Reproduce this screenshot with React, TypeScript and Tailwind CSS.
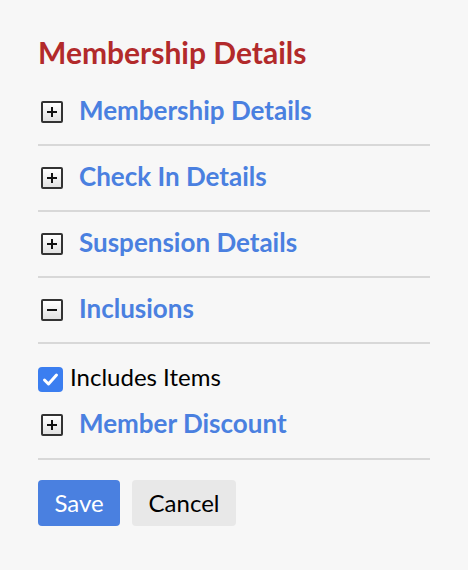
import { useState } from 'react';

type Section = { title: string; open: boolean };

function ToggleIcon({ open }: { open: boolean }) {
  return (
    <span className="flex h-[22px] w-[22px] shrink-0 items-center justify-center rounded-[2px] border-2 border-[#333] bg-gradient-to-b from-white to-[#e2e2e2]">
      <svg width="12" height="12" viewBox="0 0 12 12">
        <rect x="1" y="5" width="10" height="2" fill="#111" />
        {!open && <rect x="5" y="1" width="2" height="10" fill="#111" />}
      </svg>
    </span>
  );
}

function SectionHeader({ title, open, h = 'h-[64px]' }: Section & { h?: string }) {
  return (
    <div className={`flex ${h} items-center gap-4 pl-[3px]`}>
      <ToggleIcon open={open} />
      <span className="mb-1 text-[26px] font-bold text-[#4a80e0]">{title}</span>
    </div>
  );
}

export default function App() {
  const [includes, setIncludes] = useState(true);

  return (
    <div className="min-h-[570px] w-[468px] bg-[#f7f7f7] pl-[38px] pt-[34px] font-['Lato',sans-serif]">
      <div className="w-[392px]">
        <h1 className="mb-[10px] text-[30px] font-bold leading-[36px] text-[#b22a2b]">Membership Details</h1>

        {[
          { title: 'Membership Details', open: false },
          { title: 'Check In Details', open: false },
          { title: 'Suspension Details', open: false },
          { title: 'Inclusions', open: true },
        ].map((s) => (
          <div key={s.title} className="border-b-2 border-[#d8d8d8]">
            <SectionHeader {...s} />
          </div>
        ))}

        <label className="mt-[22px] flex h-[26px] cursor-pointer items-center gap-[7px]">
          <input
            type="checkbox"
            checked={includes}
            onChange={(e) => setIncludes(e.target.checked)}
            className="sr-only"
          />
          <span
            className={
              includes
                ? 'flex h-[25px] w-[25px] items-center justify-center rounded-[4px] bg-[#3b7ef0]'
                : 'flex h-[25px] w-[25px] items-center justify-center rounded-[4px] border-2 border-[#767676] bg-white'
            }
          >
            {includes && (
              <svg width="17" height="17" viewBox="0 0 17 17">
                <path d="M2.5 9l4 4L14.5 4" fill="none" stroke="#fff" strokeWidth="3" strokeLinecap="round" strokeLinejoin="round" />
              </svg>
            )}
          </span>
          <span className="mb-1 text-[24px] text-black">Includes Items</span>
        </label>

        <div className="border-b-2 border-[#d8d8d8]">
          <SectionHeader title="Member Discount" open={false} h="h-[66px]" />
        </div>

        <div className="mt-5 flex gap-3">
          <button className="h-[46px] w-[82px] rounded-[4px] bg-[#4a80e0] text-[24px] text-white">Save</button>
          <button className="h-[46px] w-[104px] rounded-[4px] bg-[#e8e8e8] text-[24px] text-black">Cancel</button>
        </div>
      </div>
    </div>
  );
}
